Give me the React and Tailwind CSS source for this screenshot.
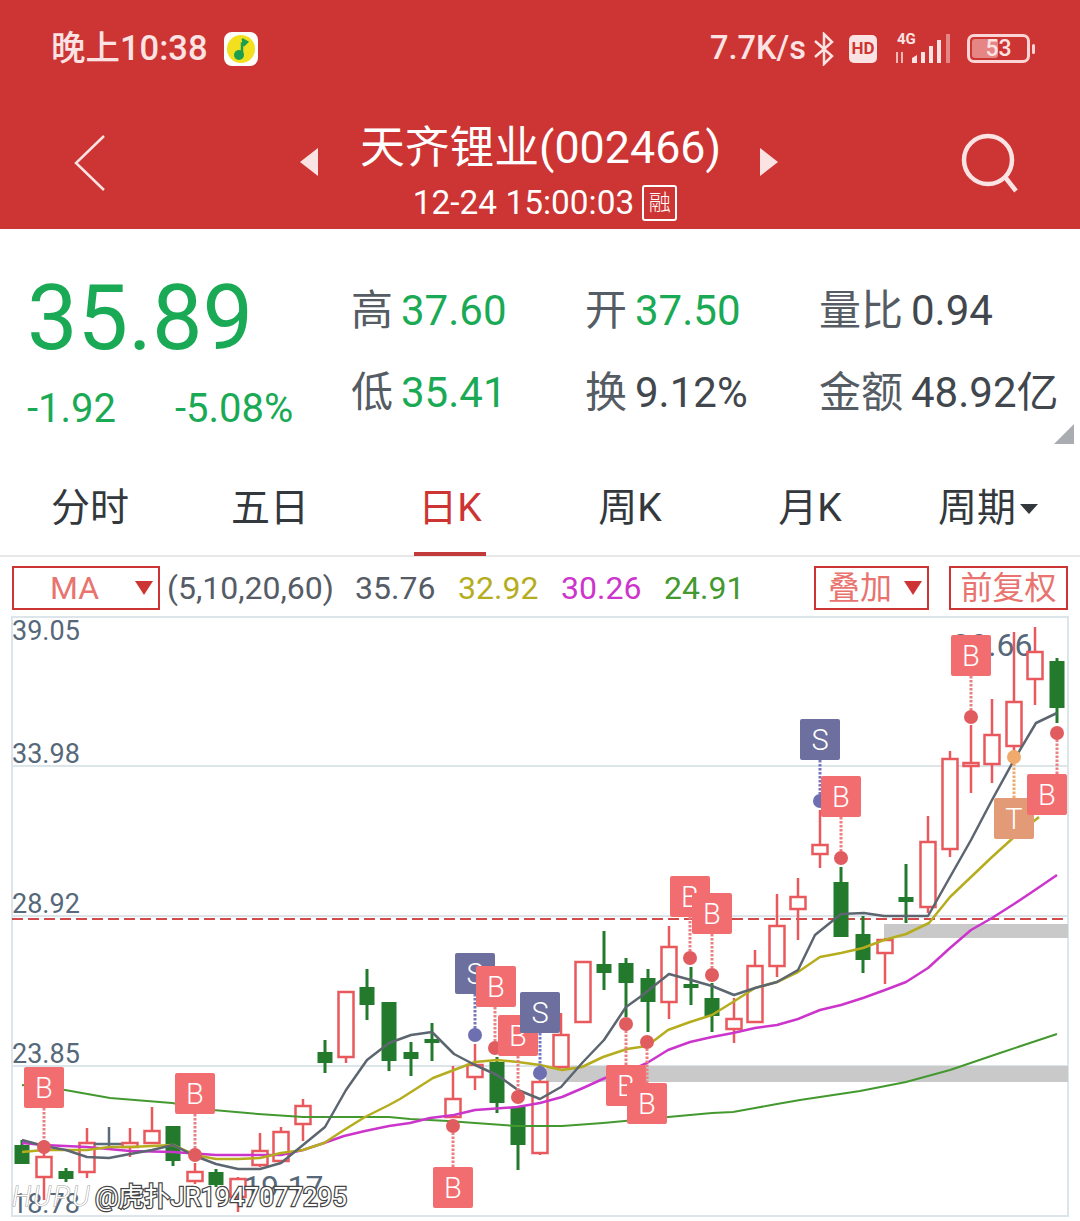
import React from 'react';

const UP = '#e9585c';
const DOWN = '#237a2c';

// x, wick top, wick bottom, body top, body bottom, kind
const candles = [
  [22, 1140, 1164, 1145, 1164, 'd'],
  [44, 1148, 1200, 1157, 1177, 'u'],
  [66, 1168, 1182, 1171, 1179, 'd'],
  [87, 1128, 1178, 1143, 1172, 'u'],
  [109, 1127, 1148, 1144, 1145, 'g'],
  [130, 1128, 1157, 1143, 1147, 'u'],
  [152, 1107, 1143, 1131, 1143, 'u'],
  [173, 1126, 1166, 1126, 1161, 'd'],
  [195, 1163, 1184, 1172, 1181, 'u'],
  [216, 1169, 1187, 1172, 1185, 'd'],
  [238, 1177, 1212, 1179, 1197, 'u'],
  [260, 1133, 1167, 1151, 1165, 'u'],
  [281, 1127, 1161, 1132, 1161, 'u'],
  [303, 1099, 1141, 1106, 1124, 'u'],
  [325, 1040, 1073, 1052, 1063, 'd'],
  [346, 992, 1063, 992, 1057, 'u'],
  [367, 969, 1020, 987, 1005, 'd'],
  [389, 1002, 1071, 1002, 1061, 'd'],
  [411, 1042, 1076, 1052, 1059, 'd'],
  [432, 1023, 1061, 1039, 1043, 'd'],
  [453, 1066, 1117, 1099, 1117, 'u'],
  [475, 1044, 1090, 1065, 1077, 'u'],
  [497, 1057, 1113, 1062, 1103, 'd'],
  [518, 1107, 1170, 1107, 1145, 'd'],
  [540, 1080, 1155, 1082, 1153, 'u'],
  [561, 1013, 1067, 1035, 1067, 'u'],
  [583, 962, 1022, 962, 1022, 'u'],
  [604, 931, 990, 964, 973, 'd'],
  [626, 958, 1017, 963, 983, 'd'],
  [648, 969, 1032, 978, 1002, 'd'],
  [669, 926, 1019, 947, 1002, 'u'],
  [691, 967, 1005, 984, 988, 'd'],
  [712, 983, 1032, 998, 1016, 'd'],
  [734, 998, 1043, 1019, 1029, 'u'],
  [755, 950, 1022, 966, 1022, 'u'],
  [777, 894, 977, 926, 966, 'u'],
  [798, 878, 940, 897, 909, 'u'],
  [820, 810, 868, 845, 854, 'u'],
  [841, 867, 937, 882, 937, 'd'],
  [863, 916, 973, 934, 960, 'd'],
  [885, 938, 984, 940, 953, 'u'],
  [906, 864, 923, 897, 902, 'd'],
  [928, 816, 913, 842, 907, 'u'],
  [950, 751, 857, 759, 849, 'u'],
  [971, 725, 793, 763, 766, 'u'],
  [992, 699, 783, 735, 764, 'u'],
  [1014, 632, 757, 702, 746, 'u'],
  [1035, 627, 705, 652, 679, 'u'],
  [1057, 658, 723, 661, 708, 'd'],
];

const ma5 = '22,1140 44,1146 66,1150 87,1157 109,1158 130,1154 152,1150 173,1145 195,1156 216,1164 238,1169 260,1169 281,1163 303,1145 325,1127 346,1090 367,1060 389,1043 411,1035 432,1032 454,1054 475,1065 497,1075 518,1090 540,1099 561,1087 583,1062 604,1040 626,1007 640,997 669,974 691,980 712,986 734,995 755,988 777,982 798,970 815,935 841,914 864,913 884,916 906,916 928,916 950,877 971,840 992,800 1014,760 1036,723 1057,713';
const ma10 = '22,1152 44,1150 87,1150 109,1147 130,1147 152,1146 173,1145 195,1155 216,1159 238,1159 260,1158 281,1153 303,1150 324,1143 344,1130 365,1117 389,1105 400,1099 433,1078 475,1062 497,1060 518,1062 540,1065 562,1070 582,1067 603,1057 627,1049 647,1046 668,1030 690,1022 712,1015 733,1002 755,988 777,982 798,972 820,957 841,953 863,948 884,940 906,934 929,923 950,897 971,877 992,857 1013,838 1039,817';
const ma20 = '22,1143 44,1145 87,1147 130,1151 173,1152 216,1155 260,1155 281,1155 303,1150 324,1143 344,1136 365,1131 389,1126 410,1123 430,1118 454,1115 475,1110 517,1107 540,1103 562,1097 583,1088 605,1078 627,1072 647,1063 668,1050 690,1042 712,1037 733,1033 755,1028 777,1025 798,1019 820,1010 841,1005 863,998 885,990 906,982 928,968 950,948 971,930 992,918 1014,904 1035,890 1057,875';
const ma60 = '22,1085 65,1090 110,1098 172,1103 213,1110 258,1114 303,1117 344,1117 389,1117 410,1119 448,1121 475,1123 516,1126 562,1126 603,1123 668,1117 712,1113 733,1112 755,1108 777,1104 800,1100 820,1097 860,1091 906,1082 950,1070 1000,1053 1057,1034';

// label, box left, box top, dot x, dot y
const markers = [
  ['B', 24, 1067, 44, 1147],
  ['B', 175, 1073, 195, 1155],
  ['B', 433, 1167, 453, 1126],
  ['S', 455, 953, 475, 1035],
  ['B', 476, 966, 495, 1048],
  ['B', 498, 1015, 518, 1097],
  ['S', 520, 992, 540, 1073],
  ['B', 606, 1065, 626, 1024],
  ['B', 627, 1083, 647, 1042],
  ['B', 670, 876, 690, 958],
  ['B', 692, 893, 712, 975],
  ['S', 800, 719, 820, 801],
  ['B', 821, 776, 841, 858],
  ['B', 951, 635, 971, 717],
  ['T', 994, 798, 1014, 757],
  ['B', 1027, 774, 1057, 733],
];

const markerColors = {
  B: { box: '#f26d70', dot: '#e05c5f', stem: '#ec7f82' },
  S: { box: '#6d6f9e', dot: '#6d6fb0', stem: '#7577c0' },
  T: { box: '#e39a76', dot: '#f0aa6c', stem: '#f0aa6c' },
};

const axisLabels = [
  ['39.05', 12, 640, 27],
  ['33.98', 12, 763, 27],
  ['28.92', 12, 913, 27],
  ['23.85', 12, 1063, 27],
  ['18.78', 12, 1213, 27],
  ['38.66', 952, 656, 32],
  ['19.17', 243, 1198, 32],
];

const Candle = ({ c }) => {
  const [x, hi, lo, top, bot, kind] = c;
  const color = kind === 'd' ? DOWN : kind === 'g' ? '#5a6b7a' : UP;
  if (kind === 'g') {
    return (
      <g stroke={color} strokeWidth="2.5">
        <line x1={x} x2={x} y1={hi} y2={lo} />
        <line x1={x - 15} x2={x + 15} y1={top} y2={top} />
      </g>
    );
  }
  if (kind === 'd') {
    return (
      <g>
        <line x1={x} x2={x} y1={hi} y2={lo} stroke={color} strokeWidth="3" />
        <rect x={x - 7.5} y={top} width="15" height={Math.max(bot - top, 3)} fill={color} />
      </g>
    );
  }
  return (
    <g>
      <line x1={x} x2={x} y1={hi} y2={lo} stroke={color} strokeWidth="2.5" />
      <rect x={x - 7.5} y={top} width="15" height={bot - top} fill="#fff" stroke={color} strokeWidth="2.5" />
    </g>
  );
};

const Chart = () => (
  <svg width="1080" height="605" viewBox="0 616 1080 605" className="block">
    <g stroke="#dce5ea" strokeWidth="2">
      <rect x="12" y="617" width="1056" height="599" fill="#fff" />
      <line x1="12" x2="1068" y1="766" y2="766" />
      <line x1="12" x2="1068" y1="916" y2="916" />
      <line x1="12" x2="1068" y1="1066" y2="1066" />
    </g>
    <rect x="884" y="924" width="184" height="14" fill="#c9c9c9" />
    <rect x="546" y="1066" width="522" height="16" fill="#c9c9c9" />
    <line x1="12" x2="1068" y1="919" y2="919" stroke="#d2494b" strokeWidth="2" strokeDasharray="11 5" />
    <g fontFamily="Roboto, sans-serif" fill="#566879">
      {axisLabels.map(([t, x, y, size]) => (
        <text key={t} x={x} y={y} fontSize={size}>{t}</text>
      ))}
    </g>
    {candles.map((c) => (
      <Candle key={c[0]} c={c} />
    ))}
    <g fill="none" strokeLinejoin="round">
      <polyline points={ma60} stroke="#43992f" strokeWidth="2" />
      <polyline points={ma20} stroke="#cc35cc" strokeWidth="2.5" />
      <polyline points={ma10} stroke="#b5ad1e" strokeWidth="2.5" />
      <polyline points={ma5} stroke="#5c6670" strokeWidth="2.5" />
    </g>
    {markers.map(([label, bx, by, dx, dy]) => {
      const col = markerColors[label];
      const stemFrom = by > dy ? by : by + 41;
      return (
        <g key={`${bx}-${by}`}>
          <line x1={dx} x2={dx} y1={stemFrom} y2={dy} stroke={col.stem} strokeWidth="3" strokeDasharray="2.5 1.5" />
          <circle cx={dx} cy={dy} r="7" fill={col.dot} />
          <rect x={bx} y={by} width="40" height="41" rx="2" fill={col.box} />
          <text x={bx + 20} y={by + 31} textAnchor="middle" fontFamily="Roboto, sans-serif" fontWeight="300" fontSize="29" fill="#fff">{label}</text>
        </g>
      );
    })}
    <text x="12" y="1206" fontFamily="Roboto, sans-serif" fontStyle="italic" fontWeight="300" fontSize="28" letterSpacing="2" fill="#fff" stroke="#9a9a9a" strokeWidth="1" paintOrder="stroke">HUPU</text>
    <text x="95" y="1206" fontFamily="Roboto, 'Noto Sans CJK SC', sans-serif" fontSize="26" fill="#fff" stroke="#444" strokeWidth="2.5" paintOrder="stroke">@虎扑JR1947077295</text>
  </svg>
);

const Stat = ({ label, value, green }) => (
  <div className="flex items-center gap-2 text-[42px] leading-none text-[#555c63]">
    <span>{label}</span>
    <span className={green ? 'text-[#1aaa55]' : 'text-[#41474d]'}>{value}</span>
  </div>
);

const tabs = ['分时', '五日', '日K', '周K', '月K'];

const App = () => (
  <div className="w-[1080px] h-[1221px] overflow-hidden bg-white [font-family:Roboto,'Noto_Sans_CJK_SC',sans-serif]">
    <header className="h-[229px] bg-[#cc3533] text-white">
      <div className="flex h-[97px] items-center pl-[51px] pr-[45px]">
        <span className="whitespace-nowrap text-[34.5px] font-medium leading-none text-[#fbe3e3]">晚上10:38</span>
        <svg width="34" height="34" viewBox="0 0 34 34" className="ml-[16px]">
          <rect width="34" height="34" rx="8" fill="#fff" />
          <circle cx="17" cy="17" r="14" fill="#f2df1d" />
          <path d="M18 7 L23 10 L20 13 L18 12 L18 22" stroke="#1b9e50" strokeWidth="2.5" fill="#1b9e50" />
          <circle cx="15" cy="23" r="5" fill="#1b9e50" />
        </svg>
        <span className="ml-auto whitespace-nowrap text-[32.5px] font-medium leading-none text-[#fbe3e3]">7.7K/s</span>
        <svg width="24" height="34" viewBox="0 0 24 34" className="ml-[6px]" fill="none" stroke="#fbe3e3" strokeWidth="2.5">
          <path d="M3 9 L20 24 L12 32 L12 2 L20 10 L3 25" />
        </svg>
        <span className="ml-[13px] flex h-[28px] w-[28px] items-center justify-center rounded-[5px] bg-[#fbe3e3] text-[17px] font-bold leading-none text-[#cc3533]">HD</span>
        <svg width="58" height="34" viewBox="0 0 58 34" className="ml-[17px]">
          <text x="3" y="12" fontSize="15" fontWeight="700" fill="#fbe3e3" fontFamily="Roboto, sans-serif">4G</text>
          <path d="M3 20 V31 M8 20 V31" stroke="#fbe3e3" strokeWidth="1.5" />
          <path d="M18 26 L23 23 V31 H18 Z M27 20 H31 V31 H27 Z M35 14 H39 V31 H35 Z M43 8 H47 V31 H43 Z" fill="#fbe3e3" />
          <rect x="52" y="2" width="4" height="29" fill="#e58684" />
        </svg>
        <div className="relative ml-[15px] flex h-[29px] w-[63px] items-center justify-center rounded-[7px] border-[3px] border-[#fbd5d5] text-[23px] leading-none text-[#fbe3e3]">
          <span className="absolute left-[2px] top-[2px] h-[19px] w-[26px] rounded-[3px] bg-[#e58684]" />
          <span className="relative font-medium">53</span>
        </div>
        <span className="ml-[2px] h-[10px] w-[3px] rounded-sm bg-[#fbd5d5]" />
      </div>
      <div className="flex h-[132px] items-start pl-[74px] pr-[59px]">
        <svg width="32" height="58" viewBox="0 0 32 58" className="mt-[37px]" fill="none" stroke="#fbe3e3" strokeWidth="2.5">
          <path d="M30 2 L2 29 L30 56" />
        </svg>
        <svg width="20" height="28" viewBox="0 0 20 28" className="ml-[194px] mt-[51px]" fill="#fbe3e3">
          <path d="M18 0 V28 L0 14 Z" />
        </svg>
        <div className="flex w-[440px] flex-col items-center">
          <div className="mt-[25px] whitespace-nowrap pl-[1px] text-[44.8px] leading-[52px]">天齐锂业(002466)</div>
          <div className="mt-[9px] flex items-center pl-[10px] text-[33.4px] leading-[40px]">
            <span className="whitespace-nowrap">12-24 15:00:03</span>
            <span className="ml-[8px] flex h-[36px] w-[35px] items-center justify-center rounded-[3px] border-2 border-white text-[22px] font-light leading-none">融</span>
          </div>
        </div>
        <svg width="20" height="28" viewBox="0 0 20 28" className="mt-[51px]" fill="#fbe3e3">
          <path d="M0 0 V28 L18 14 Z" />
        </svg>
        <svg width="60" height="60" viewBox="0 0 60 60" className="ml-auto mt-[36px]" fill="none" stroke="#fbe3e3" strokeWidth="4.5">
          <circle cx="27" cy="27" r="24" />
          <path d="M44 44 L55 58" />
        </svg>
      </div>
    </header>

    <section className="relative flex h-[241px] pl-[27px]">
      <div className="w-[324px] pt-[42px]">
        <div className="text-[90px] leading-[96px] text-[#1aaa55]">35.89</div>
        <div className="mt-[18px] flex text-[40px] leading-[48px] text-[#1aaa55]">
          <span className="w-[148px]">-1.92</span>
          <span>-5.08%</span>
        </div>
      </div>
      <div className="grid grid-cols-[234px_234px_260px] grid-rows-[82px_82px] items-center pt-[41px]">
        <Stat label="高" value="37.60" green />
        <Stat label="开" value="37.50" green />
        <Stat label="量比" value="0.94" />
        <Stat label="低" value="35.41" green />
        <Stat label="换" value="9.12%" />
        <Stat label="金额" value="48.92亿" />
      </div>
      <svg width="20" height="20" viewBox="0 0 20 20" className="absolute right-[6px] top-[195px]" fill="#a9adb1">
        <path d="M20 0 V20 H0 Z" />
      </svg>
    </section>

    <nav className="relative flex h-[87px] border-b-2 border-[#e8e8e8] pb-[8px] pr-[4px] text-[39px] text-[#33383d]">
      {tabs.map((t, i) => (
        <div key={t} className="flex w-[180px] items-center justify-center">
          <span className={i === 2 ? 'text-[#cc3533]' : ''}>{t}</span>
        </div>
      ))}
      <div className="flex flex-1 items-center justify-center">
        周期
        <svg width="18" height="10" viewBox="0 0 18 10" className="ml-[4px]" fill="#33383d">
          <path d="M0 0 H18 L9 10 Z" />
        </svg>
      </div>
      <span className="absolute bottom-[-1px] left-[414px] h-[4px] w-[72px] bg-[#c23a3a]" />
    </nav>

    <div className="flex h-[59px] items-center pl-[12px] pr-[12px] pt-[2px] text-[32px] leading-none text-[#555c66]">
      <div className="flex h-[44px] w-[148px] items-center justify-between border-2 border-[#cc3533] pl-[36px] pr-[5px] text-[#e8736f]">
        MA
        <svg width="18" height="14" viewBox="0 0 18 14" fill="#cc3533"><path d="M0 0 H18 L9 14 Z" /></svg>
      </div>
      <span className="ml-[7px] w-[188px] whitespace-nowrap">(5,10,20,60)</span>
      <span className="w-[103px]">35.76</span>
      <span className="w-[103px] text-[#b5ad1e]">32.92</span>
      <span className="w-[103px] text-[#cc35cc]">30.26</span>
      <span className="text-[#43992f]">24.91</span>
      <div className="ml-auto flex h-[44px] w-[115px] items-center justify-between border-2 border-[#cc3533] pl-[12px] pr-[5px] text-[#e8736f]">
        叠加
        <svg width="18" height="14" viewBox="0 0 18 14" fill="#cc3533"><path d="M0 0 H18 L9 14 Z" /></svg>
      </div>
      <div className="ml-[20px] flex h-[44px] w-[119px] items-center justify-center border-2 border-[#cc3533] text-[#e8736f]">前复权</div>
    </div>

    <Chart />
  </div>
);

export default App;
